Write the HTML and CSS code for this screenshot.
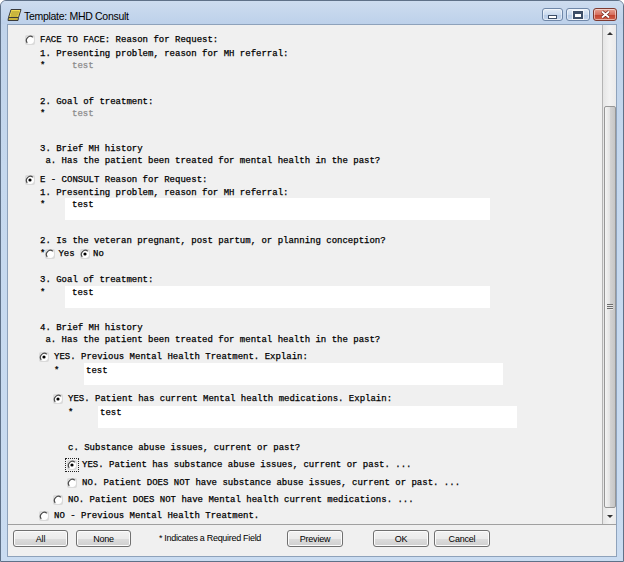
FILE: index.html
```html
<!DOCTYPE html>
<html>
<head>
<meta charset="utf-8">
<title>Template: MHD Consult</title>
<link rel="stylesheet" href="styles.css">
</head>
<body>
<div class="window">
  <div class="titlebar">
    <svg class="appicon" width="15" height="14" viewBox="0 0 15 14">
      <path d="M4 1.5 H14 L11.5 9.5 H1.5 Z" fill="#f4de52" stroke="#3a3a3a" stroke-width="1"/>
      <path d="M1.5 9.5 H11.5 L11 12.5 H1 Z" fill="#c9b33a" stroke="#3a3a3a" stroke-width="1"/>
      <path d="M4.5 4 H12 M4 6 H11.5 M3.5 8 H10.5" stroke="#8a7a20" stroke-width="0.8"/>
    </svg>
    <span class="title">Template: MHD Consult</span>
    <span class="spacer"></span>
    <div class="tbuttons">
      <span class="tbtn tmin"><span class="glyph-min"></span></span>
      <span class="tbtn tmax"><span class="glyph-max"></span></span>
      <span class="tbtn tclose">
        <svg width="11" height="9" viewBox="0 0 11 9"><path d="M2 1.5 L9 7.5 M9 1.5 L2 7.5" stroke="#6a2018" stroke-width="3.2"/><path d="M2 1.5 L9 7.5 M9 1.5 L2 7.5" stroke="#fff" stroke-width="1.8"/></svg>
      </span>
    </div>
  </div>

  <div class="client">
    <div class="pane">
      <div class="content">
        <div class="row mt8"><svg class="radio" viewBox="0 0 10 10"><rect width="10" height="10" rx="2" fill="#dadada"/><circle cx="5" cy="5" r="4" fill="#fff"/><path d="M7.8 2.2A4 4 0 0 0 2.2 7.8" fill="none" stroke="#4a4a4a" stroke-width="1.2"/></svg>FACE TO FACE: Reason for Request:</div>
        <div class="row t0 mt2">1. Presenting problem, reason for MH referral:</div>
        <div class="fieldrow t0"><span class="star s25">*</span><span class="field disabled w425 p7">test</span></div>
        <div class="row t0 mt14">2. Goal of treatment:</div>
        <div class="fieldrow t0"><span class="star s25">*</span><span class="field disabled w425 p7">test</span></div>
        <div class="row t0 mt13">3. Brief MH history</div>
        <div class="row t0"> a. Has the patient been treated for mental health in the past?</div>

        <div class="row mt7"><svg class="radio" viewBox="0 0 10 10"><rect width="10" height="10" rx="2" fill="#dadada"/><circle cx="5" cy="5" r="4" fill="#fff"/><path d="M7.8 2.2A4 4 0 0 0 2.2 7.8" fill="none" stroke="#4a4a4a" stroke-width="1.2"/><circle cx="5" cy="5" r="1.6" fill="#000"/></svg>E - CONSULT Reason for Request:</div>
        <div class="row t0 mt1">1. Presenting problem, reason for MH referral:</div>
        <div class="fieldrow t0"><span class="star s25">*</span><span class="field w425 p7">test</span></div>
        <div class="row t0 mt14">2. Is the veteran pregnant, post partum, or planning conception?</div>
        <div class="row t0 mt1"><span>*</span><svg class="radio tight" viewBox="0 0 10 10"><rect width="10" height="10" rx="2" fill="#dadada"/><circle cx="5" cy="5" r="4" fill="#fff"/><path d="M7.8 2.2A4 4 0 0 0 2.2 7.8" fill="none" stroke="#4a4a4a" stroke-width="1.2"/></svg>Yes <svg class="radio tight" viewBox="0 0 10 10"><rect width="10" height="10" rx="2" fill="#dadada"/><circle cx="5" cy="5" r="4" fill="#fff"/><path d="M7.8 2.2A4 4 0 0 0 2.2 7.8" fill="none" stroke="#4a4a4a" stroke-width="1.2"/><circle cx="5" cy="5" r="1.6" fill="#000"/></svg>No</div>
        <div class="row t0 mt14">3. Goal of treatment:</div>
        <div class="fieldrow t0 mt1"><span class="star s25">*</span><span class="field w425 p7">test</span></div>
        <div class="row t0 mt13">4. Brief MH history</div>
        <div class="row t0"> a. Has the patient been treated for mental health in the past?</div>

        <div class="row l1 mt5"><svg class="radio" viewBox="0 0 10 10"><rect width="10" height="10" rx="2" fill="#dadada"/><circle cx="5" cy="5" r="4" fill="#fff"/><path d="M7.8 2.2A4 4 0 0 0 2.2 7.8" fill="none" stroke="#4a4a4a" stroke-width="1.2"/><circle cx="5" cy="5" r="1.6" fill="#000"/></svg>YES. Previous Mental Health Treatment. Explain:</div>
        <div class="fieldrow t1 mt1"><span class="star s30 pt2">*</span><span class="field w419 p2 pt2">test</span></div>

        <div class="row l2 mt7"><svg class="radio" viewBox="0 0 10 10"><rect width="10" height="10" rx="2" fill="#dadada"/><circle cx="5" cy="5" r="4" fill="#fff"/><path d="M7.8 2.2A4 4 0 0 0 2.2 7.8" fill="none" stroke="#4a4a4a" stroke-width="1.2"/><circle cx="5" cy="5" r="1.6" fill="#000"/></svg>YES. Patient has current Mental health medications. Explain:</div>
        <div class="fieldrow t2 mt2"><span class="star s30">*</span><span class="field w419 p2">test</span></div>

        <div class="row t2 mt13">c. Substance abuse issues, current or past?</div>
        <div class="row l3 mt5"><span class="focus"><svg class="radio nomr" viewBox="0 0 10 10"><rect width="10" height="10" rx="2" fill="#dadada"/><circle cx="5" cy="5" r="4" fill="#fff"/><path d="M7.8 2.2A4 4 0 0 0 2.2 7.8" fill="none" stroke="#4a4a4a" stroke-width="1.2"/><circle cx="5" cy="5" r="1.6" fill="#000"/></svg></span>YES. Patient has substance abuse issues, current or past. ...</div>
        <div class="row l3 mt6"><svg class="radio" viewBox="0 0 10 10"><rect width="10" height="10" rx="2" fill="#dadada"/><circle cx="5" cy="5" r="4" fill="#fff"/><path d="M7.8 2.2A4 4 0 0 0 2.2 7.8" fill="none" stroke="#4a4a4a" stroke-width="1.2"/></svg>NO. Patient DOES NOT have substance abuse issues, current or past. ...</div>
        <div class="row l2 mt5"><svg class="radio" viewBox="0 0 10 10"><rect width="10" height="10" rx="2" fill="#dadada"/><circle cx="5" cy="5" r="4" fill="#fff"/><path d="M7.8 2.2A4 4 0 0 0 2.2 7.8" fill="none" stroke="#4a4a4a" stroke-width="1.2"/></svg>NO. Patient DOES NOT have Mental health current medications. ...</div>
        <div class="row l1 mt4"><svg class="radio" viewBox="0 0 10 10"><rect width="10" height="10" rx="2" fill="#dadada"/><circle cx="5" cy="5" r="4" fill="#fff"/><path d="M7.8 2.2A4 4 0 0 0 2.2 7.8" fill="none" stroke="#4a4a4a" stroke-width="1.2"/></svg>NO - Previous Mental Health Treatment.</div>
      </div>
      <div class="scrollbar">
        <div class="sb-btn"><span class="arrow-up"></span></div>
        <div class="sb-track">
          <div class="thumb"><span class="grip"></span></div>
        </div>
        <div class="sb-btn"><span class="arrow-down"></span></div>
      </div>
    </div>
    <div class="buttonbar">
      <span class="btn b-all">All</span>
      <span class="btn b-none">None</span>
      <span class="note">* Indicates a Required Field</span>
      <span class="btn b-preview">Preview</span>
      <span class="btn b-ok">OK</span>
      <span class="btn b-cancel">Cancel</span>
    </div>
  </div>
</div>
</body>
</html>
```
FILE: styles.css
```css
* { box-sizing: border-box; }
html, body { margin: 0; padding: 0; }
body {
  width: 624px;
  height: 562px;
  overflow: hidden;
  background: #fff;
}
.window {
  width: 624px;
  height: 562px;
  display: flex;
  flex-direction: column;
  border: 1px solid #5f7188;
  border-radius: 6px 6px 0 0;
  background: linear-gradient(to bottom, #c0d3ea 0, #c5d8ee 30%, #cadcf1 100%);
}
.titlebar {
  height: 23px;
  display: flex;
  align-items: flex-start;
  padding-left: 6px;
  padding-top: 6px;
  background: linear-gradient(to bottom, #cddcef 0, #bdd1ea 100%);
  border-radius: 5px 5px 0 0;
}
.appicon { flex: none; margin-right: 2px; margin-top: 1px; }
.title {
  font-family: "Liberation Sans", Arial, sans-serif;
  font-size: 10.5px;
  letter-spacing: -0.3px;
  line-height: 14px;
  color: #000;
  margin-top: 2px;
}
.spacer { flex: 1; }
.tbuttons { display: flex; gap: 3px; margin-right: 6px; margin-top: 1px; }
.tbtn {
  height: 13px;
  border: 1px solid #6f87a8;
  border-radius: 3px;
  display: flex;
  align-items: center;
  justify-content: center;
  background: linear-gradient(to bottom, #e3ecf7 0, #cbdbef 50%, #b6cbe6 51%, #c6d7ee 100%);
  box-shadow: inset 0 0 0 1px rgba(255,255,255,0.5);
}
.tmin { width: 21px; }
.tmax { width: 24px; }
.tclose {
  width: 24px;
  border-color: #7d3a30;
  background: linear-gradient(to bottom, #e7a293 0, #d7705f 50%, #c2402c 51%, #d0604a 100%);
}
.glyph-min {
  width: 9px; height: 4px;
  margin-top: 4px;
  border: 1px solid #3d4f68;
  background: #fff;
}
.glyph-max {
  width: 10px; height: 8px;
  border: 1px solid #3d4f68;
  border-top-width: 2px;
  background: #fff;
  box-shadow: inset 0 0 0 1px #3d4f68;
  outline: 1px solid rgba(255,255,255,0.7);
}

.client {
  flex: 1;
  margin: 0 6px 4px 6px;
  border: 1px solid #8ea2bb;
  background: #f0f0f0;
  display: flex;
  flex-direction: column;
}
.pane {
  height: 500px;
  display: flex;
  border-bottom: 1px solid #a0a0a0;
}
.content {
  flex: 1;
  overflow: hidden;
  padding-left: 17px;
  font-family: "Liberation Mono", "Courier New", monospace;
  font-size: 9px;
  color: #000;
  -webkit-text-stroke: 0.25px #000;
}
.row {
  height: 12px;
  padding-top: 2px;
  line-height: 12px;
  white-space: pre;
  display: flex;
  align-items: center;
}
.radio { width: 10px; height: 10px; flex: none; margin-right: 5px; }
.radio.tight { margin-right: 3px; }
.radio.nomr { margin-right: 0; display: block; }
.focus {
  display: inline-block;
  outline: 1px dotted #222;
  outline-offset: 1px;
  margin-right: 5px;
}
.t0 { padding-left: 15px; }
.t1 { padding-left: 29px; }
.t2 { padding-left: 43px; }
.l1 { padding-left: 14px; }
.l2 { padding-left: 28px; }
.l3 { padding-left: 42px; }

.fieldrow { display: flex; height: 22px; line-height: 12px; }
.star { flex: none; padding-top: 1px; }
.s25 { width: 25px; }
.s30 { width: 30px; }
.field { height: 22px; padding-top: 1px; background: #fff; }
.pt2 { padding-top: 2px; }
.field.disabled { background: transparent; color: #8c8c8c; -webkit-text-stroke: 0.25px #8c8c8c; }
.w425 { width: 425px; }
.w419 { width: 419px; }
.p7 { padding-left: 7px; }
.p2 { padding-left: 2px; }

.mt1 { margin-top: 1px; }
.mt2 { margin-top: 2px; }
.mt4 { margin-top: 4px; }
.mt5 { margin-top: 5px; }
.mt6 { margin-top: 6px; }
.mt7 { margin-top: 7px; }
.mt8 { margin-top: 8px; }
.mt13 { margin-top: 13px; }
.mt14 { margin-top: 14px; }

.scrollbar {
  width: 14px;
  flex: none;
  display: flex;
  flex-direction: column;
  border-left: 1px solid #b4b4b4;
  background: linear-gradient(to right, #e6e6e6, #f2f2f2 50%, #ebebeb);
}
.sb-btn { height: 17px; display: flex; align-items: center; justify-content: center; }
.sb-btn:last-child { height: 16px; }
.arrow-up { width: 0; height: 0; border-left: 3px solid transparent; border-right: 3px solid transparent; border-bottom: 3px solid #333; }
.arrow-down { width: 0; height: 0; border-left: 3px solid transparent; border-right: 3px solid transparent; border-top: 3px solid #333; }
.sb-track { flex: 1; padding-top: 64px; }
.thumb {
  height: 402px;
  margin-left: 1px;
  border: 1px solid #979797;
  border-radius: 2px;
  background: linear-gradient(to right, #f4f4f4 0, #e4e4e4 45%, #d2d2d2 55%, #c6c6c6 100%);
  display: flex;
  align-items: center;
  justify-content: center;
}
.grip {
  width: 6px; height: 6px;
  background: repeating-linear-gradient(to bottom, #6d6d6d 0 1px, #e8e8e8 1px 2px);
}

.buttonbar {
  flex: 1;
  display: flex;
  align-items: flex-start;
  padding-top: 5px;
  font-family: "Liberation Sans", Arial, sans-serif;
  font-size: 9px;
  color: #000;
}
.btn {
  width: 55px;
  height: 17px;
  border: 1px solid #707070;
  border-radius: 3px;
  display: flex;
  align-items: center;
  justify-content: center;
  background: linear-gradient(to bottom, #f2f2f2 0, #ebebeb 50%, #dddddd 51%, #cfcfcf 100%);
  box-shadow: inset 0 0 0 1px #fcfcfc;
  letter-spacing: -0.2px;
}
.b-all { margin-left: 5px; }
.b-none { margin-left: 8px; }
.note { width: 104px; margin-left: 27px; line-height: 17px; white-space: nowrap; letter-spacing: -0.3px; text-align: center; }
.b-preview { margin-left: 25px; width: 56px; }
.b-ok { margin-left: 30px; width: 56px; }
.b-cancel { margin-left: 5px; width: 56px; }
```
